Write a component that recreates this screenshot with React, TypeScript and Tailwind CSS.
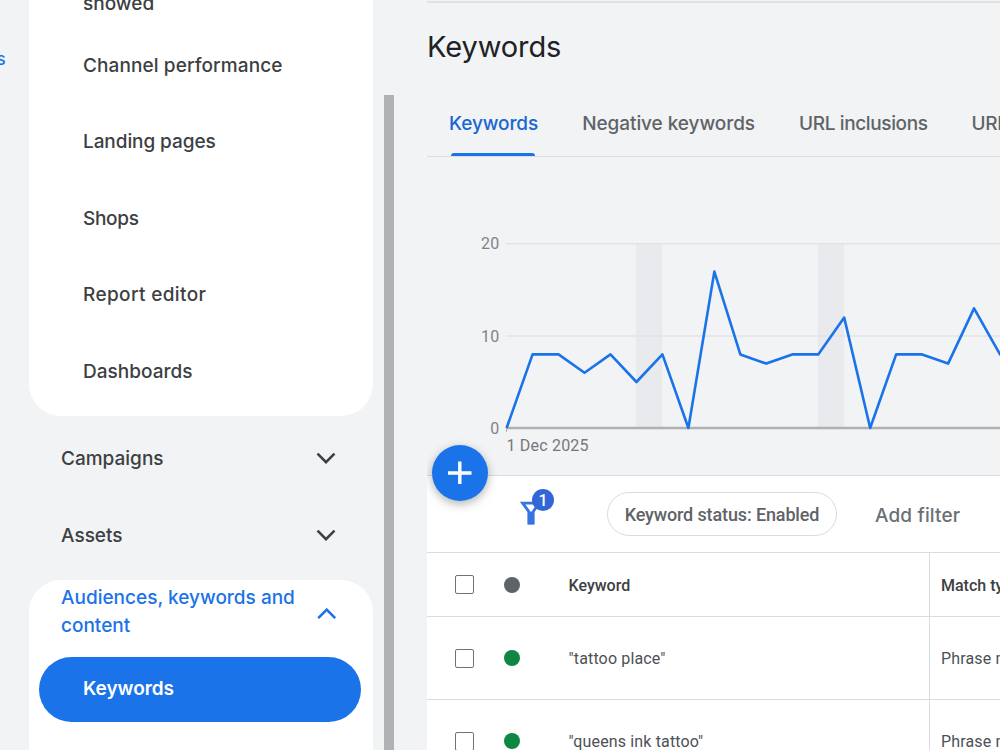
import clsx from "clsx"

const REPORTS = [
  { label: "Channel performance", tracking: "tracking-[0.1px]" },
  { label: "Landing pages", tracking: "tracking-[-0.08px]" },
  { label: "Shops", tracking: "tracking-[-0.3px]" },
  { label: "Report editor", tracking: "tracking-[0.37px]" },
  { label: "Dashboards", tracking: "tracking-[0.03px]" },
]

const SECTIONS = ["Campaigns", "Assets"]

const TABS = [
  { label: "Keywords", tracking: "tracking-[-0.1px]" },
  { label: "Negative keywords", tracking: "tracking-[-0.06px]" },
  { label: "URL inclusions", tracking: "tracking-[-0.37px]" },
  { label: "URL exclusions", tracking: "tracking-[-0.37px]" },
]

const ROWS = [
  { keyword: '"tattoo place"', match: "Phrase match" },
  { keyword: '"queens ink tattoo"', match: "Phrase match" },
]

const CLICKS = [0, 8, 8, 6, 8, 5, 8, 0, 17, 8, 7, 8, 8, 12, 0, 8, 8, 7, 13, 8, 6]

function Chevron({ up = false, className }: { up?: boolean; className?: string }) {
  return (
    <svg viewBox="0 0 20 12" className={clsx("h-3 w-5 shrink-0", className)} fill="none">
      <path
        d={up ? "M1.2 10.2 9.7 1.7l8.5 8.5" : "M1.5 1.7 10 10.2l8.5-8.5"}
        stroke="currentColor"
        strokeWidth={2.6}
      />
    </svg>
  )
}

function Sidebar() {
  return (
    <nav className="w-[344px] shrink-0 font-['Inter',sans-serif] text-[19px] font-medium text-[#3c4043]">
      <div className="h-[416px] overflow-hidden rounded-b-[32px] bg-white pl-[54px]">
        <div className="flex h-[28px] items-start">
          <span className="-mt-2 leading-6">showed</span>
        </div>
        {REPORTS.map((item) => (
          <div key={item.label} className="flex h-[76.4px] items-center">
            <span className={item.tracking}>{item.label}</span>
          </div>
        ))}
      </div>

      <div className="pt-[3px] pb-[7px]">
        {SECTIONS.map((label) => (
          <div key={label} className="flex h-[77px] items-center justify-between pr-[37px] pl-8">
            <span className="pt-[3px]">{label}</span>
            <Chevron />
          </div>
        ))}
      </div>

      <div className="h-[220px] rounded-t-[32px] bg-white px-2.5">
        <div className="flex h-[77px] items-start justify-between pt-1 pr-[26px] pl-[22px] text-[#1a73e8]">
          <span className="w-[240px] leading-7">
            Audiences, keywords and
            <br />
            content
          </span>
          <Chevron up className="mt-6" />
        </div>
        <div className="flex h-[65px] w-[322px] items-center rounded-full bg-[#1a73e8] pl-11 font-semibold tracking-[-0.05px] text-white">
          Keywords
        </div>
      </div>
    </nav>
  )
}

function Tabs() {
  return (
    <div className="flex h-[67px] gap-11 border-b border-[#dadce0] pl-[22px] whitespace-nowrap text-[#5f6368]">
      {TABS.map((tab, i) => (
        <div
          key={tab.label}
          className={clsx(
            "flex flex-col justify-between text-[19px] font-medium",
            tab.tracking,
            i === 0 && "text-[#1967d2]",
          )}
        >
          <span className="pt-5 leading-7">{tab.label}</span>
          {i === 0 && <span className="mr-[3px] ml-0.5 h-[3px] rounded-t bg-[#1a73e8]" />}
        </div>
      ))}
    </div>
  )
}

function Chart() {
  const points = CLICKS.map((v, i) => `${79.6 + i * 25.97},${271 - v * 9.2}`).join(" ")
  return (
    <svg viewBox="0 0 573 318" className="block h-[318px] w-[573px] font-['Roboto',sans-serif]">
      <rect x={209} y={87} width={26} height={184} fill="#e8eaed" />
      <rect x={391} y={87} width={26} height={184} fill="#e8eaed" />
      <path d="M79 86.8H573M79 179H573" stroke="#e1e3e4" strokeWidth={1.6} />
      <path d="M79 271H573" stroke="#aeb0b1" strokeWidth={2.6} />
      <path d="M79.5 271V275" stroke="#aeb0b1" />
      <polyline points={points} fill="none" stroke="#1a73e8" strokeWidth={2.6} strokeLinejoin="round" />
      <g fill="#808386" fontSize={16} textAnchor="end" letterSpacing={0.2}>
        <text x={72.5} y={92}>20</text>
        <text x={72.5} y={185}>10</text>
        <text x={72.5} y={277}>0</text>
      </g>
      <text x={79.5} y={294} fill="#75787b" fontSize={16} letterSpacing={0.2}>
        1 Dec 2025
      </text>
    </svg>
  )
}

function FilterBar() {
  return (
    <div className="relative flex h-[78px] items-center border-y border-[#dadce0] bg-white font-['Roboto',sans-serif]">
      <button
        type="button"
        aria-label="Add keywords"
        className="absolute top-[-31px] left-[5px] grid size-14 place-items-center rounded-full bg-[#1a73e8] text-white shadow-[0_3px_10px_rgba(60,64,67,0.4)]"
      >
        <svg viewBox="0 0 24 24" className="size-6" fill="none" stroke="currentColor" strokeWidth={3.4}>
          <path d="M0 12H23.5M11.8 0.5V23" />
        </svg>
      </button>

      <div className="relative mb-2 ml-[93px] h-[34px] w-[35px]">
        <svg viewBox="0 0 35 34" className="size-full">
          <path d="M2.6 10.2H19.4L13.1 18.6V30H8.9V18.6Z" fill="none" stroke="#3574e2" strokeWidth={2.8} />
          <path d="M7.8 18.6H14.2V31.3H7.8Z" fill="#3574e2" />
        </svg>
        <span className="absolute top-[-4px] right-px grid size-[22px] place-items-center rounded-full bg-[#3367d6] text-base font-medium text-white">
          1
        </span>
      </div>

      <div className="ml-[52px] grid h-11 w-[230px] place-items-center rounded-full border-[1.5px] border-[#dadce0] pt-px text-lg font-medium tracking-[-0.13px] text-[#5f6368]">
        Keyword status: Enabled
      </div>
      <span className="ml-[38px] pt-1 font-['Inter',sans-serif] text-[19px] font-medium tracking-[0.15px] text-[#6b6f73]">
        Add filter
      </span>
    </div>
  )
}

function TableRow({
  keyword,
  match,
  header = false,
}: {
  keyword: string
  match: string
  header?: boolean
}) {
  return (
    <div
      className={clsx(
        "flex items-stretch border-b border-[#dadce0] bg-white text-base whitespace-nowrap",
        header ? "h-16 font-medium text-[#3c4043]" : "h-[83px] tracking-[0.15px] text-[#4d5155]",
      )}
    >
      <div className="flex w-[503px] shrink-0 items-center border-r-[1.5px] border-[#dadce0] pl-7">
        <span className="size-[19px] rounded-xs border-[1.5px] border-[#707376]" />
        <span className={clsx("ml-[29.5px] size-4 rounded-full", header ? "bg-[#5f6368]" : "bg-[#0f8643]")} />
        <span className="ml-[49px] pt-0.5">{keyword}</span>
      </div>
      <span className="flex items-center pt-0.5 pl-[11px]">{match}</span>
    </div>
  )
}

export default function App() {
  return (
    <div className="flex h-[750px] w-[1000px] overflow-hidden bg-[#f1f3f4]">
      <div className="flex w-[29px] shrink-0 items-start">
        <span className="-ml-[3.5px] pt-[47px] font-['Inter',sans-serif] text-[17px] leading-6 font-medium text-[#1a73e8]">
          s
        </span>
      </div>
      <Sidebar />
      <div className="flex w-[54px] shrink-0 pt-[95px] pl-[11px]">
        <div className="w-[10px] bg-[#b0b2b4]" />
      </div>
      <main className="w-[573px] shrink-0 overflow-hidden font-['Inter',sans-serif]">
        <div className="mt-px h-[89px] border-t-2 border-[#dfe1e3]">
          <h1 className="pt-[22px] text-[29px] leading-[44px] tracking-[-0.1px] text-[#202124]">Keywords</h1>
        </div>
        <Tabs />
        <Chart />
        <FilterBar />
        <div className="font-['Roboto',sans-serif]">
          <TableRow header keyword="Keyword" match="Match type" />
          {ROWS.map((row) => (
            <TableRow key={row.keyword} {...row} />
          ))}
        </div>
      </main>
    </div>
  )
}
